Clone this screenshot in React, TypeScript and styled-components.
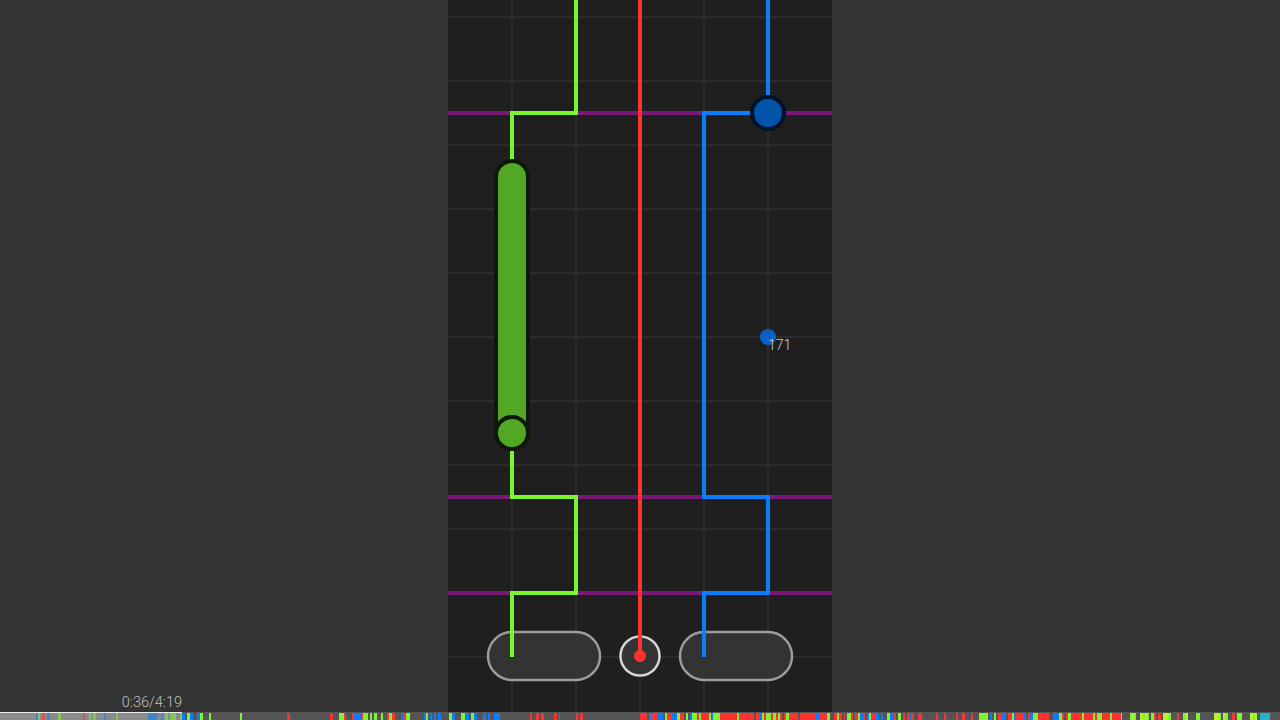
import styled, { createGlobalStyle } from 'styled-components'

const GREEN = '#7df52e'
const RED = '#ff3131'
const BLUE = '#0a7dff'
const PURPLE = '#7a1878'

const DURATION = 259
const ELAPSED = 36.4
const WIDTH = 1280

// density + colour mix for the bottom note strip
const regions: [number, number, number, string[]][] = [
  [0, 148, 0.14, [GREEN, GREEN, GREEN, RED, BLUE]],
  [148, 182, 0.4, [BLUE, GREEN, BLUE]],
  [182, 212, 0.35, [GREEN, BLUE]],
  [212, 275, 0.12, [GREEN, BLUE]],
  [275, 330, 0.08, [RED, GREEN]],
  [330, 410, 0.55, [GREEN, BLUE, RED, GREEN]],
  [410, 424, 0.03, [RED]],
  [424, 500, 0.55, [GREEN, BLUE, BLUE, GREEN]],
  [500, 530, 0.03, [RED]],
  [530, 560, 0.4, [RED]],
  [560, 640, 0.08, [RED]],
  [640, 845, 0.85, [RED, RED, RED, RED, BLUE, GREEN]],
  [845, 922, 0.7, [RED, BLUE, GREEN, RED]],
  [922, 979, 0.08, [RED]],
  [979, 986, 1, [GREEN]],
  [986, 1064, 0.7, [GREEN, BLUE, RED, RED]],
  [1064, 1122, 0.95, [RED, RED, RED, GREEN]],
  [1122, 1130, 0, [RED]],
  [1130, 1260, 0.65, [GREEN, '#b8f030', GREEN, RED]],
  [1260, 1270, 1, ['#22b4c4']],
  [1270, 1280, 0, [RED]],
]

const mulberry = (seed: number) => () => {
  seed |= 0
  seed = (seed + 0x6d2b79f5) | 0
  let t = Math.imul(seed ^ (seed >>> 15), 1 | seed)
  t = (t + Math.imul(t ^ (t >>> 7), 61 | t)) ^ t
  return ((t ^ (t >>> 14)) >>> 0) / 4294967296
}

type Tick = { x: number; w: number; color: string }

const buildTicks = (): Tick[] => {
  const rand = mulberry(42)
  const ticks: Tick[] = []
  regions.forEach(([from, to, density, colors]) => {
    let x = from
    while (x < to) {
      if (rand() < density) {
        const w = rand() < 0.4 ? 3 : 2
        ticks.push({ x, w: Math.min(w, to - x), color: colors[Math.floor(rand() * colors.length)] })
        x += w
      } else {
        x += 2
      }
    }
  })
  return ticks
}

const ticks = buildTicks()

const GlobalStyle = createGlobalStyle`
  html, body {
    margin: 0;
    padding: 0;
    background: #333333;
    overflow: hidden;
  }
  #root {
    height: 100vh;
  }
`

const Page = styled.div`
  height: 100vh;
  display: flex;
  flex-direction: column;
  font-family: Roboto, "Liberation Sans", sans-serif;
`

const Stage = styled.div`
  flex: 1;
  min-height: 0;
  display: flex;
  justify-content: center;
  background: #333333;
`

const Field = styled.svg`
  display: block;
  flex: none;
  width: 384px;
  height: 712px;
  background: #1f1f1f;
`

const Footer = styled.div`
  position: relative;
  flex: none;
  height: 8px;
`

const Timer = styled.span`
  position: absolute;
  bottom: calc(100% + 2px);
  transform: translateX(-100%);
  font-size: 14.5px;
  font-weight: 300;
  line-height: 1;
  color: #c2c2c2;
  white-space: nowrap;
`

const Strip = styled.svg`
  display: block;
  width: 100%;
  height: 8px;
`

const Label = styled.text`
  font-family: Roboto, "Liberation Sans", sans-serif;
  font-size: 14px;
  font-weight: 300;
  fill: #cfcfcf;
`

const lanes = [64, 128, 192, 256, 320]
const rows = Array.from({ length: 11 }, (_, i) => 17 + i * 64)
const bars = [113, 497, 593]

const fmt = (s: number) => `${Math.floor(s / 60)}:${String(Math.floor(s % 60)).padStart(2, '0')}`

const App = () => {
  const progress = Math.round((ELAPSED / DURATION) * WIDTH) + 2

  return (
    <Page>
      <GlobalStyle />
      <Stage>
        <Field viewBox='0 0 384 712'>
          {lanes.map((x) => (
            <line key={'v' + x} x1={x} y1={0} x2={x} y2={712} stroke='#2c2c2c' strokeWidth={2} />
          ))}
          {rows.map((y) => (
            <line key={'h' + y} x1={0} y1={y} x2={384} y2={y} stroke='#2c2c2c' strokeWidth={2} />
          ))}
          {bars.map((y) => (
            <line key={'b' + y} x1={0} y1={y} x2={384} y2={y} stroke={PURPLE} strokeWidth={4} />
          ))}

          <rect x={40} y={632} width={112} height={48} rx={24} fill='#333333' stroke='#9c9c9c' strokeWidth={2.5} />
          <rect x={232} y={632} width={112} height={48} rx={24} fill='#333333' stroke='#9c9c9c' strokeWidth={2.5} />
          <circle cx={192} cy={656} r={19.5} fill='#333333' stroke='#d6d6d6' strokeWidth={2.5} />

          <g fill='none' strokeWidth={4} strokeLinejoin='miter'>
            <path d='M128 0 V113 H64 V170' stroke={GREEN} />
            <path d='M64 440 V497 H128 V593 H64 V657' stroke={GREEN} />
            <path d='M192 0 V656' stroke={RED} />
            <path d='M320 0 V113 H256 V497 H320 V593 H256 V657' stroke={BLUE} />
          </g>

          <rect x={48} y={161} width={32} height={288} rx={16} fill='#52a824' stroke='#0d1906' strokeWidth={4} />
          <circle cx={64} cy={433} r={16} fill='#52a824' stroke='#0d1906' strokeWidth={4} />

          <circle cx={320} cy={113} r={16} fill='#0055a8' stroke='#00122a' strokeWidth={4} />
          <circle cx={192} cy={656} r={6} fill={RED} />

          <circle cx={320} cy={337} r={8} fill='#0a62c6' />
          <Label x={320} y={350}>171</Label>
        </Field>
      </Stage>
      <Footer>
        <Timer style={{ left: progress }}>
          {fmt(ELAPSED)}/{fmt(DURATION)}
        </Timer>
        <Strip viewBox={`0 0 ${WIDTH} 8`} preserveAspectRatio='none'>
          <rect x={0} y={0} width={WIDTH} height={8} fill='#555555' />
          <rect x={0} y={0} width={progress} height={8} fill='#8b8b8b' />
          {ticks.map((t) => (
            <rect
              key={t.x}
              x={t.x}
              y={1}
              width={t.w}
              height={7}
              fill={t.color}
              opacity={t.x < progress ? 0.55 : 1}
            />
          ))}
          <rect x={0} y={0} width={progress} height={1} fill='#eeeeee' />
        </Strip>
      </Footer>
    </Page>
  )
}

export default App
